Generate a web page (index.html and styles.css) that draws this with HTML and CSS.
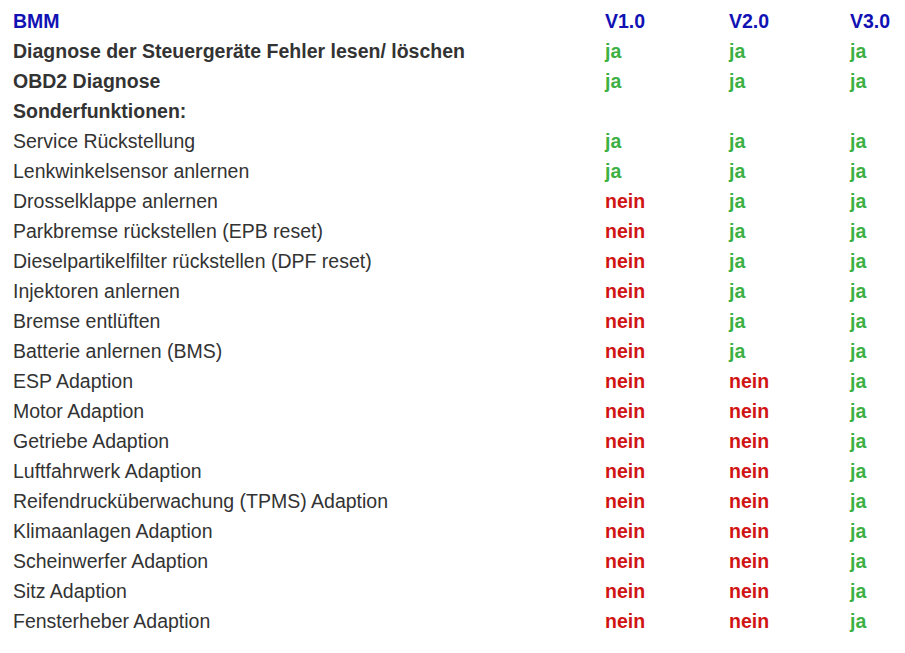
FILE: index.html
```html
<!DOCTYPE html>
<html lang="de">
<head>
<meta charset="utf-8">
<link rel="stylesheet" href="styles.css">
<title>BMM</title>
</head>
<body>
<table class="cmp">
<tr class="head"><td>BMM</td><td>V1.0</td><td>V2.0</td><td>V3.0</td></tr>
<tr class="bold"><td>Diagnose der Steuergeräte Fehler lesen/ löschen</td><td class="ja">ja</td><td class="ja">ja</td><td class="ja">ja</td></tr>
<tr class="bold"><td>OBD2 Diagnose</td><td class="ja">ja</td><td class="ja">ja</td><td class="ja">ja</td></tr>
<tr class="bold"><td>Sonderfunktionen:</td><td></td><td></td><td></td></tr>
<tr><td>Service Rückstellung</td><td class="ja">ja</td><td class="ja">ja</td><td class="ja">ja</td></tr>
<tr><td>Lenkwinkelsensor anlernen</td><td class="ja">ja</td><td class="ja">ja</td><td class="ja">ja</td></tr>
<tr><td>Drosselklappe anlernen</td><td class="nein">nein</td><td class="ja">ja</td><td class="ja">ja</td></tr>
<tr><td>Parkbremse rückstellen (EPB reset)</td><td class="nein">nein</td><td class="ja">ja</td><td class="ja">ja</td></tr>
<tr><td>Dieselpartikelfilter rückstellen (DPF reset)</td><td class="nein">nein</td><td class="ja">ja</td><td class="ja">ja</td></tr>
<tr><td>Injektoren anlernen</td><td class="nein">nein</td><td class="ja">ja</td><td class="ja">ja</td></tr>
<tr><td>Bremse entlüften</td><td class="nein">nein</td><td class="ja">ja</td><td class="ja">ja</td></tr>
<tr><td>Batterie anlernen (BMS)</td><td class="nein">nein</td><td class="ja">ja</td><td class="ja">ja</td></tr>
<tr><td>ESP Adaption</td><td class="nein">nein</td><td class="nein">nein</td><td class="ja">ja</td></tr>
<tr><td>Motor Adaption</td><td class="nein">nein</td><td class="nein">nein</td><td class="ja">ja</td></tr>
<tr><td>Getriebe Adaption</td><td class="nein">nein</td><td class="nein">nein</td><td class="ja">ja</td></tr>
<tr><td>Luftfahrwerk Adaption</td><td class="nein">nein</td><td class="nein">nein</td><td class="ja">ja</td></tr>
<tr><td>Reifendrucküberwachung (TPMS) Adaption</td><td class="nein">nein</td><td class="nein">nein</td><td class="ja">ja</td></tr>
<tr><td>Klimaanlagen Adaption</td><td class="nein">nein</td><td class="nein">nein</td><td class="ja">ja</td></tr>
<tr><td>Scheinwerfer Adaption</td><td class="nein">nein</td><td class="nein">nein</td><td class="ja">ja</td></tr>
<tr><td>Sitz Adaption</td><td class="nein">nein</td><td class="nein">nein</td><td class="ja">ja</td></tr>
<tr><td>Fensterheber Adaption</td><td class="nein">nein</td><td class="nein">nein</td><td class="ja">ja</td></tr>
</table>
</body>
</html>
```

FILE: styles.css
```css
html, body {
  margin: 0;
  padding: 0;
  background: #ffffff;
}
body {
  font-family: "Liberation Sans", Arial, sans-serif;
  font-size: 19.5px;
  color: #333333;
  padding: 6px 0 0 13px;
}
.cmp {
  border-collapse: collapse;
  border-spacing: 0;
}
.cmp td {
  padding: 0;
  height: 30px;
  line-height: 30px;
  vertical-align: middle;
  white-space: nowrap;
}
.cmp td:nth-child(1) { width: 592px; }
.cmp td:nth-child(2) { width: 124px; }
.cmp td:nth-child(3) { width: 121px; }
.head td {
  color: #1212b4;
  font-weight: bold;
}
.bold td { font-weight: bold; }
.cmp td.ja {
  color: #3cb043;
  font-weight: bold;
}
.cmp td.nein {
  color: #d01414;
  font-weight: bold;
}
```
